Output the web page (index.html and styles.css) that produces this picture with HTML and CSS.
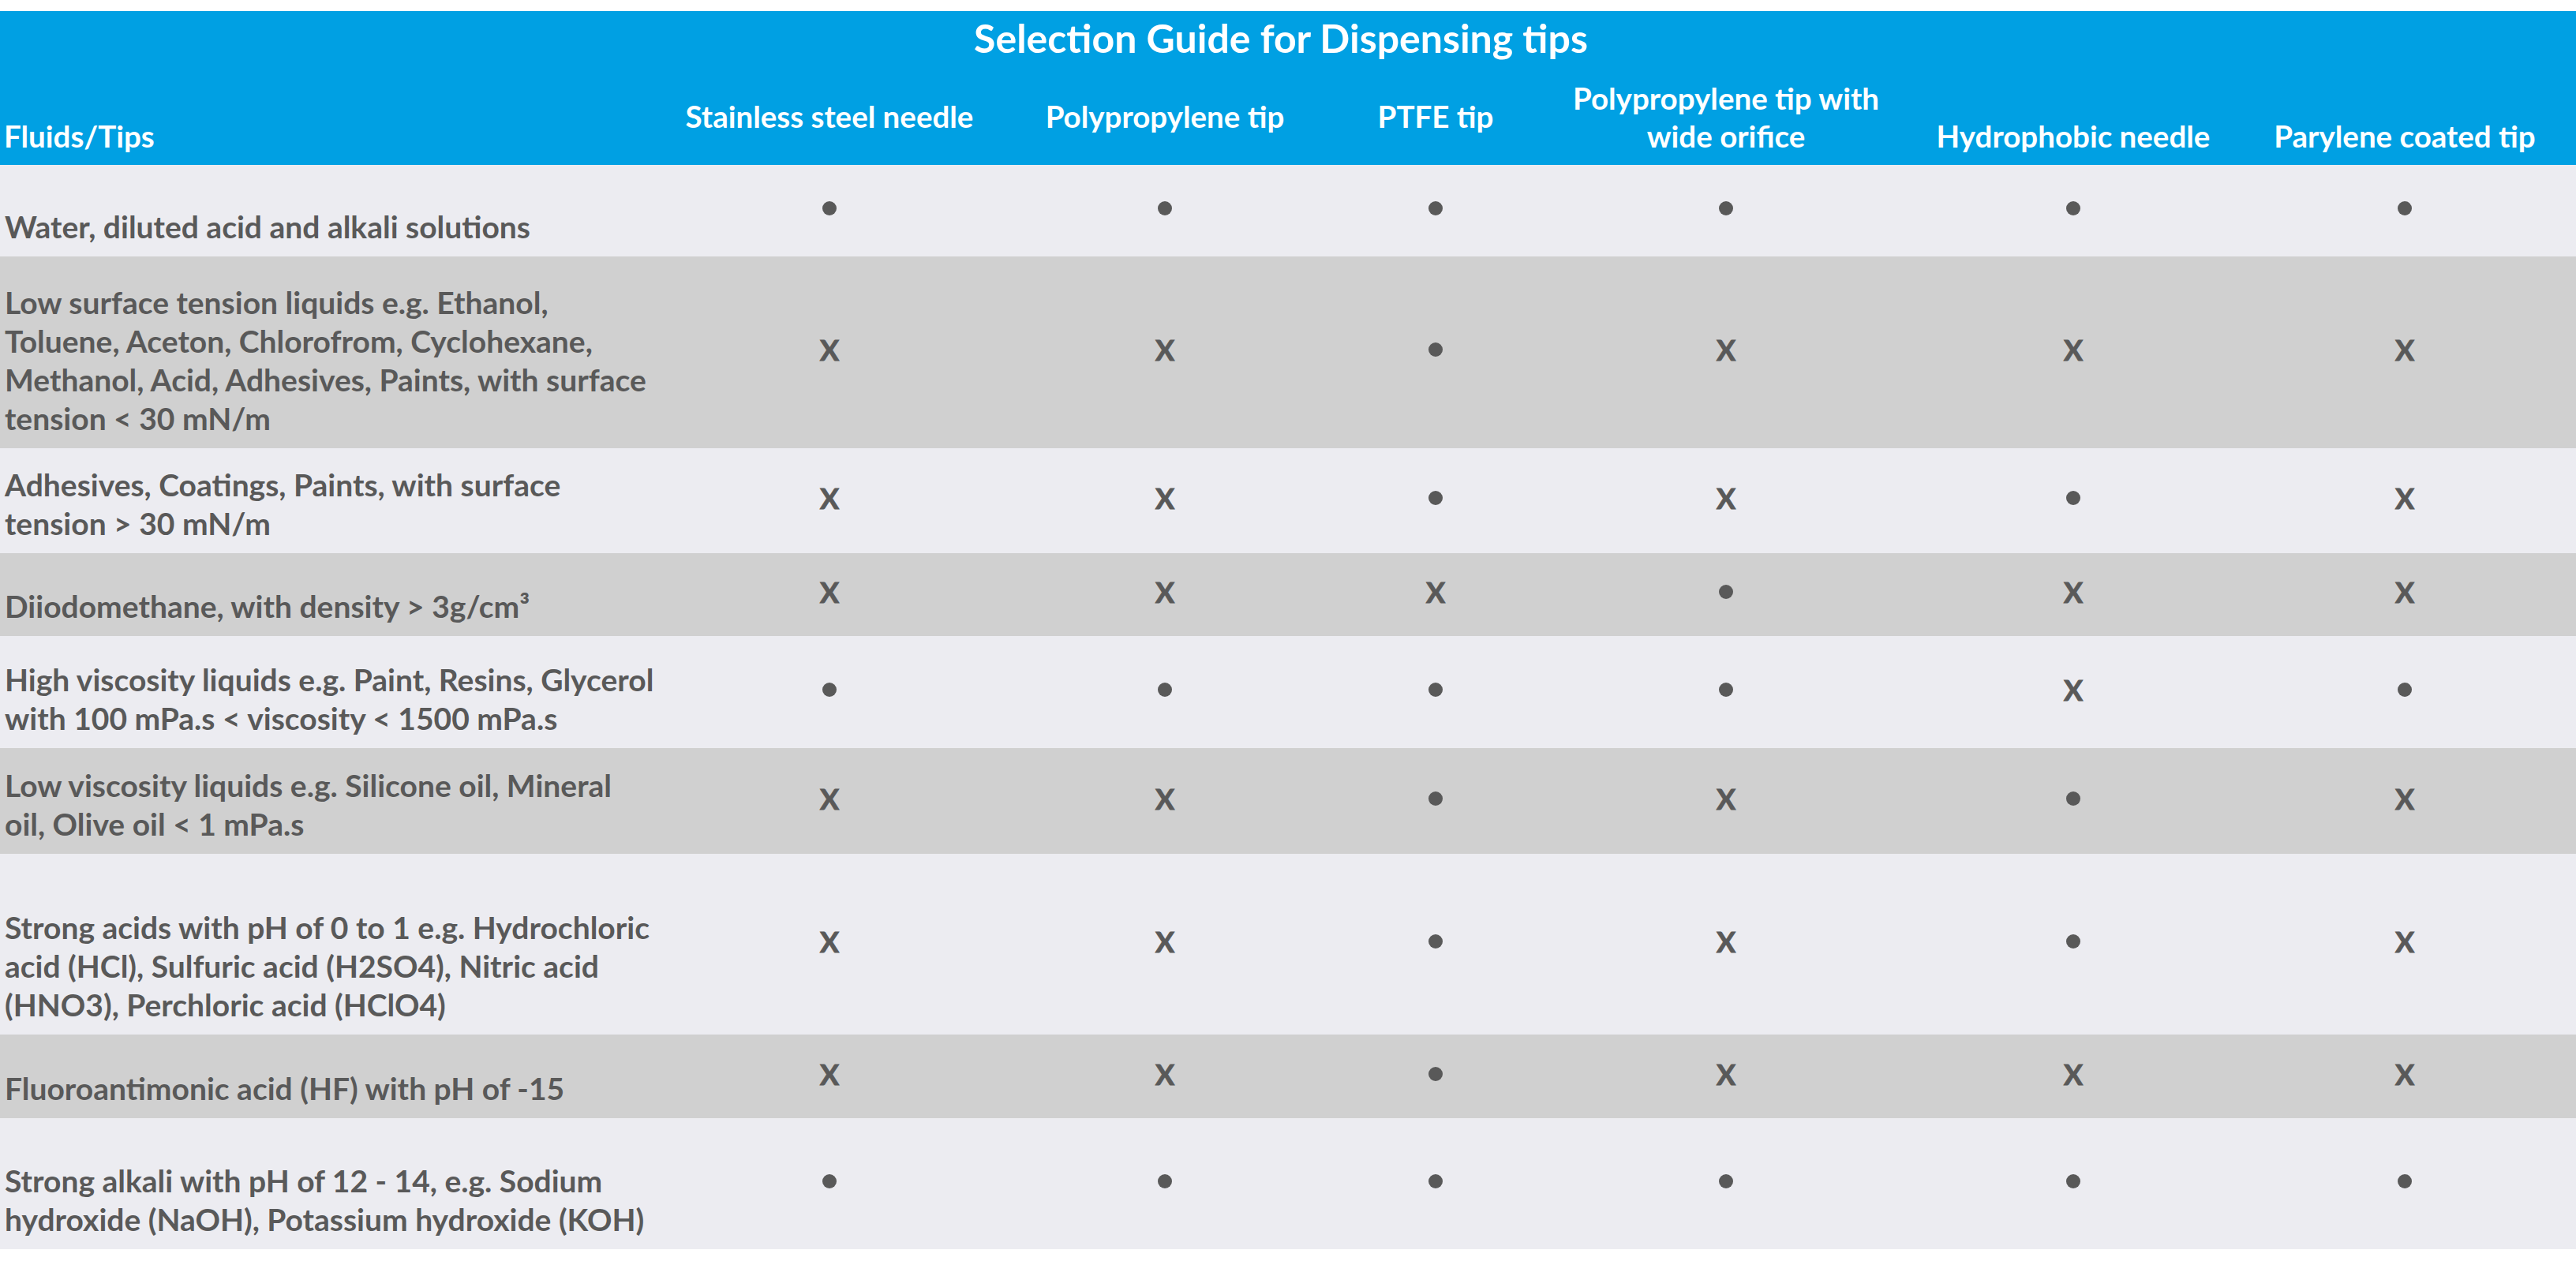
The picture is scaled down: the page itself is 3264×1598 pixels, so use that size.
FILE: index.html
```html
<!DOCTYPE html>
<html lang="en">
<head>
<meta charset="utf-8">
<title>Selection Guide for Dispensing tips</title>
<link rel="stylesheet" href="styles.css">
</head>
<body>
<div class="table">
  <div class="head">
    <div class="title">Selection Guide for Dispensing tips</div>
    <div class="grid head-grid">
      <div class="hc first"><span>Fluids/Tips</span></div>
      <div class="hc mid"><span>Stainless steel needle</span></div>
      <div class="hc mid"><span>Polypropylene tip</span></div>
      <div class="hc mid"><span>PTFE tip</span></div>
      <div class="hc"><span>Polypropylene tip with<br>wide orifice</span></div>
      <div class="hc"><span>Hydrophobic needle</span></div>
      <div class="hc"><span>Parylene coated tip</span></div>
    </div>
  </div>

  <div class="grid row light r1">
    <div class="label"><span>Water, diluted acid and alkali solutions</span></div>
    <div class="sym"><span class="dot"></span></div>
    <div class="sym"><span class="dot"></span></div>
    <div class="sym"><span class="dot"></span></div>
    <div class="sym"><span class="dot"></span></div>
    <div class="sym"><span class="dot"></span></div>
    <div class="sym"><span class="dot"></span></div>
  </div>

  <div class="grid row dark r2">
    <div class="label"><span>Low surface tension liquids e.g. Ethanol,<br>Toluene, Aceton, Chlorofrom, Cyclohexane,<br>Methanol, Acid, Adhesives, Paints, with surface<br>tension &lt; 30 mN/m</span></div>
    <div class="sym"><span class="x">X</span></div>
    <div class="sym"><span class="x">X</span></div>
    <div class="sym"><span class="dot"></span></div>
    <div class="sym"><span class="x">X</span></div>
    <div class="sym"><span class="x">X</span></div>
    <div class="sym"><span class="x">X</span></div>
  </div>

  <div class="grid row light r3">
    <div class="label"><span>Adhesives, Coatings, Paints, with surface<br>tension &gt; 30 mN/m</span></div>
    <div class="sym"><span class="x">X</span></div>
    <div class="sym"><span class="x">X</span></div>
    <div class="sym"><span class="dot"></span></div>
    <div class="sym"><span class="x">X</span></div>
    <div class="sym"><span class="dot"></span></div>
    <div class="sym"><span class="x">X</span></div>
  </div>

  <div class="grid row dark r4">
    <div class="label"><span>Diiodomethane, with density &gt; 3g/cm³</span></div>
    <div class="sym"><span class="x">X</span></div>
    <div class="sym"><span class="x">X</span></div>
    <div class="sym"><span class="x">X</span></div>
    <div class="sym"><span class="dot"></span></div>
    <div class="sym"><span class="x">X</span></div>
    <div class="sym"><span class="x">X</span></div>
  </div>

  <div class="grid row light r5">
    <div class="label"><span>High viscosity liquids e.g. Paint, Resins, Glycerol<br>with 100 mPa.s &lt; viscosity &lt; 1500 mPa.s</span></div>
    <div class="sym"><span class="dot"></span></div>
    <div class="sym"><span class="dot"></span></div>
    <div class="sym"><span class="dot"></span></div>
    <div class="sym"><span class="dot"></span></div>
    <div class="sym"><span class="x">X</span></div>
    <div class="sym"><span class="dot"></span></div>
  </div>

  <div class="grid row dark r6">
    <div class="label"><span>Low viscosity liquids e.g. Silicone oil, Mineral<br>oil, Olive oil &lt; 1 mPa.s</span></div>
    <div class="sym"><span class="x">X</span></div>
    <div class="sym"><span class="x">X</span></div>
    <div class="sym"><span class="dot"></span></div>
    <div class="sym"><span class="x">X</span></div>
    <div class="sym"><span class="dot"></span></div>
    <div class="sym"><span class="x">X</span></div>
  </div>

  <div class="grid row light r7">
    <div class="label"><span>Strong acids with pH of 0 to 1 e.g. Hydrochloric<br>acid (HCl), Sulfuric acid (H2SO4), Nitric acid<br>(HNO3), Perchloric acid (HClO4)</span></div>
    <div class="sym"><span class="x">X</span></div>
    <div class="sym"><span class="x">X</span></div>
    <div class="sym"><span class="dot"></span></div>
    <div class="sym"><span class="x">X</span></div>
    <div class="sym"><span class="dot"></span></div>
    <div class="sym"><span class="x">X</span></div>
  </div>

  <div class="grid row dark r8">
    <div class="label"><span>Fluoroantimonic acid (HF) with pH of -15</span></div>
    <div class="sym"><span class="x">X</span></div>
    <div class="sym"><span class="x">X</span></div>
    <div class="sym"><span class="dot"></span></div>
    <div class="sym"><span class="x">X</span></div>
    <div class="sym"><span class="x">X</span></div>
    <div class="sym"><span class="x">X</span></div>
  </div>

  <div class="grid row light r9">
    <div class="label"><span>Strong alkali with pH of 12 - 14, e.g. Sodium<br>hydroxide (NaOH), Potassium hydroxide (KOH)</span></div>
    <div class="sym"><span class="dot"></span></div>
    <div class="sym"><span class="dot"></span></div>
    <div class="sym"><span class="dot"></span></div>
    <div class="sym"><span class="dot"></span></div>
    <div class="sym"><span class="dot"></span></div>
    <div class="sym"><span class="dot"></span></div>
  </div>
</div>
</body>
</html>
```

FILE: styles.css
```css
html, body {
  margin: 0;
  padding: 0;
  background: #ffffff;
}

body {
  padding-top: 14px;
  font-family: Lato, "Open Sans", "Noto Sans", sans-serif;
  font-weight: 700;
}

.table {
  width: 3264px;
}

.head {
  background: #00a0e3;
  color: #ffffff;
  height: 195px;
  display: flex;
  flex-direction: column;
}

.title {
  text-align: center;
  font-size: 50px;
  line-height: 60px;
  padding-top: 4px;
  padding-right: 18px;
}

.grid {
  display: grid;
  grid-template-columns: 838px 426px 424px 262px 474px 406px 434px;
}

.head-grid {
  flex: 1;
}

.hc {
  display: flex;
  align-items: flex-end;
  justify-content: center;
  text-align: center;
  font-size: 38.5px;
  line-height: 48px;
  padding-bottom: 13px;
  white-space: nowrap;
}

.hc.first {
  justify-content: flex-start;
  text-align: left;
  padding-left: 5px;
}

.hc.mid {
  padding-bottom: 38px;
}

.row {
  color: #595959;
}

.light {
  background: #ececf1;
}

.dark {
  background: #d0d0d0;
}

.r1 { height: 116px; }
.r2 { height: 243px; }
.r3 { height: 133px; }
.r4 { height: 105px; }
.r5 { height: 142px; }
.r6 { height: 134px; }
.r7 { height: 229px; }
.r8 { height: 106px; }
.r9 { height: 166px; }

.label {
  display: flex;
  align-items: flex-end;
  font-size: 39px;
  line-height: 49px;
  padding: 0 0 13px 6px;
  white-space: nowrap;
}

.sym {
  display: flex;
  align-items: center;
  justify-content: center;
  padding-bottom: 7px;
}

.x {
  font-size: 36px;
  line-height: 40px;
  -webkit-text-stroke: 1px #595959;
}

.dot {
  display: block;
  width: 18px;
  height: 18px;
  border-radius: 50%;
  background: #595959;
}
```
